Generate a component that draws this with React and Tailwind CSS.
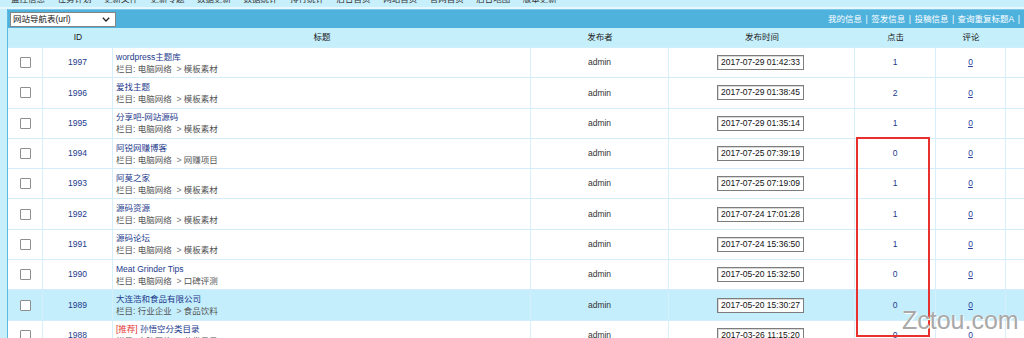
import React from 'react';

const navItems = ['监控信息', '任务计划', '更新文件', '更新专题', '数据更新', '数据统计', '排行统计', '后台首页', '网站首页', '官网首页', '后台地图', '版本更新'];

const rows = [
  { id: 1997, title: 'wordpress主题库', cat: '电脑网络', sub: '模板素材', time: '2017-07-29 01:42:33', hits: 1 },
  { id: 1996, title: '爱找主题', cat: '电脑网络', sub: '模板素材', time: '2017-07-29 01:38:45', hits: 2 },
  { id: 1995, title: '分享吧-网站源码', cat: '电脑网络', sub: '模板素材', time: '2017-07-29 01:35:14', hits: 1 },
  { id: 1994, title: '阿锐网赚博客', cat: '电脑网络', sub: '网赚项目', time: '2017-07-25 07:39:19', hits: 0 },
  { id: 1993, title: '阿莫之家', cat: '电脑网络', sub: '模板素材', time: '2017-07-25 07:19:09', hits: 1 },
  { id: 1992, title: '源码资源', cat: '电脑网络', sub: '模板素材', time: '2017-07-24 17:01:28', hits: 1 },
  { id: 1991, title: '源码论坛', cat: '电脑网络', sub: '模板素材', time: '2017-07-24 15:36:50', hits: 1 },
  { id: 1990, title: 'Meat Grinder Tips', cat: '电脑网络', sub: '口碑评测', time: '2017-05-20 15:32:50', hits: 0 },
  { id: 1989, title: '大连浩和食品有限公司', cat: '行业企业', sub: '食品饮料', time: '2017-05-20 15:30:27', hits: 0, active: true },
  { id: 1988, title: '孙悟空分类目录', cat: '电脑网络', sub: '分类目录', time: '2017-03-26 11:15:20', hits: 0, hot: true },
];

const cols = 'grid grid-cols-[35px_70px_418px_138px_186px_81px_70px_60px]';
const cell = 'border-r border-[#d6effa] flex items-center';

function Row({ r }) {
  return (
    <div className={`${cols} h-[30.3px] border-b border-[#d3eefa] ${r.active ? 'bg-[#c4eefb]' : 'bg-white'}`}>
      <div className={`${cell} justify-center`}>
        <div className="w-[11px] h-[11px] border border-[#8e8e8e] bg-white rounded-[1px] ml-[1px]" />
      </div>
      <div className={`${cell} justify-center text-[#23398c]`}>{r.id}</div>
      <div className={`${cell} pl-[3px]`}>
        <div className="leading-[12px]">
          <div className="text-[#1d3a8c]">
            {r.hot && <span className="text-[#e3332f]">[推荐] </span>}
            {r.title}
          </div>
          <div className="text-[#555]">
            栏目: {r.cat} <span className="text-[#777]">&nbsp;&gt;</span> {r.sub}
          </div>
        </div>
      </div>
      <div className={`${cell} justify-center text-[#333]`}>admin</div>
      <div className={`${cell} justify-center`}>
        <div className="h-[15px] px-[3px] border border-[#7d7d7d] bg-white text-[#111] leading-[13px] shadow-[inset_1px_1px_0_#d8d8d8] ml-[-2px]">
          {r.time}
        </div>
      </div>
      <div className={`${cell} justify-center text-[#23398c]`}>{r.hits}</div>
      <div className={`${cell} justify-center text-[#2a3f9a] underline`}>0</div>
      <div className={cell} />
    </div>
  );
}

export default function App() {
  return (
    <div
      className="relative w-[1024px] h-[338px] overflow-hidden bg-[#c8effc] text-[8.5px]"
      style={{ fontFamily: '"Liberation Sans", "Noto Sans CJK SC", sans-serif' }}
    >
      {/* top menu, mostly scrolled off */}
      <div className="h-[7px] overflow-hidden">
        <div className="flex gap-[12.5px] pl-[11px] mt-[-7px] text-[#333] leading-[12px]">
          {navItems.map(n => (
            <span key={n}>{n}</span>
          ))}
        </div>
      </div>
      <div className="h-[2px] bg-[#e6f8fe]" />

      <div className="flex">
        <div className="w-[7px] shrink-0" />
        <div className="border-l border-[#5cb9e2] w-[1017px] shrink-0">
          {/* toolbar */}
          <div className="h-[19px] bg-[#4eb2dd] border-t border-[#7cc8ea] flex items-center justify-between pl-[2px] pr-[4px]">
            <div className="w-[106px] h-[15px] bg-white border border-[#858585] flex items-center justify-between pl-[2px] pr-[5px] text-[#111]">
              <span>网站导航表(url)</span>
              <svg width="8" height="5" viewBox="0 0 8 5">
                <path d="M0.8 0.8 L4 4 L7.2 0.8" stroke="#222" strokeWidth="1.3" fill="none" />
              </svg>
            </div>
            <div className="text-white flex gap-[3.5px]">
              <span>我的信息</span><span>|</span>
              <span>签发信息</span><span>|</span>
              <span>投稿信息</span><span>|</span>
              <span>查询重复标题A</span><span>|</span>
            </div>
          </div>

          {/* header */}
          <div className={`${cols} h-[20px] bg-[#c6effc] text-[#222] border-b border-[#d0eefa]`}>
            <div />
            <div className="flex items-center justify-center">ID</div>
            <div className="flex items-center justify-center">标题</div>
            <div className="flex items-center justify-center">发布者</div>
            <div className="flex items-center justify-center">发布时间</div>
            <div className="flex items-center justify-center">点击</div>
            <div className="flex items-center justify-center">评论</div>
            <div />
          </div>

          {rows.map(r => (
            <Row key={r.id} r={r} />
          ))}
        </div>
      </div>

      {/* annotation box */}
      <div className="absolute left-[856px] top-[137px] w-[74px] h-[200px] border-2 border-[#e8312f]" />

      {/* watermark */}
      <div
        className="absolute left-[902px] top-[308px] text-[25px] leading-none text-[#a9a9a9]"
        style={{ textShadow: '0 0 1px #fff, 1px 1px 0 #fff' }}
      >
        Zctou.com
      </div>
    </div>
  );
}
